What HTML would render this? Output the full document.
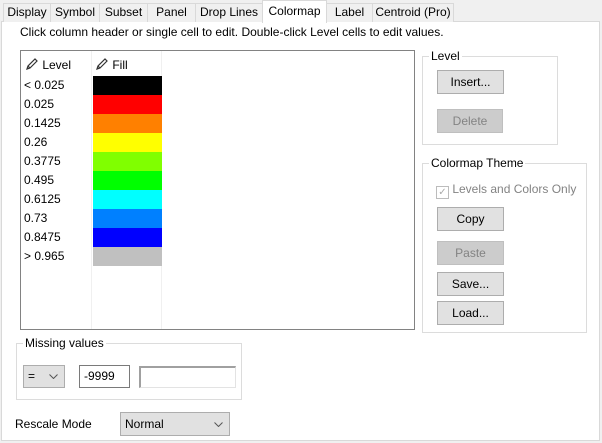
<!DOCTYPE html>
<html><head><style>
*{margin:0;padding:0;box-sizing:border-box}
body{width:602px;height:443px;background:#f0f0f0;position:relative;overflow:hidden;font-family:"Liberation Sans",sans-serif;font-size:12px;color:#000}
.a{position:absolute}
.tab{position:absolute;top:3px;height:19px;border:1px solid #d9d9d9;border-bottom:none;background:#f0f0f0;text-align:center;line-height:17px;font-size:12px}
.panel{position:absolute;left:1px;top:21px;width:599px;height:420px;background:#fff;border:1px solid #d9d9d9}
.grp{position:absolute;border:1px solid #dcdcdc}
.grp span{position:absolute;top:-8px;left:6px;background:#fff;padding:0 2px;line-height:14px}
.btn{position:absolute;width:67px;height:24px;background:#e1e1e1;border:1px solid #adadad;text-align:center;line-height:22px}
.dis{background:#cccccc;border-color:#bfbfbf;color:#838383}
.row{position:absolute;left:3px;height:19px;line-height:19px}
.sw{position:absolute;left:72px;width:69px;height:19px}
.chev{position:absolute;right:6px;top:8px}
</style></head><body>
<div class="panel"></div>
<div class="tab" style="left:3px;width:48px">Display</div>
<div class="tab" style="left:50px;width:50px">Symbol</div>
<div class="tab" style="left:99px;width:49px">Subset</div>
<div class="tab" style="left:147px;width:49px">Panel</div>
<div class="tab" style="left:195px;width:68px">Drop Lines</div>
<div class="tab" style="left:262px;top:0;height:23px;width:65px;background:#fff;line-height:20px;z-index:2">Colormap</div>
<div class="tab" style="left:326px;width:47px">Label</div>
<div class="tab" style="left:372px;width:82px">Centroid (Pro)</div>

<div class="a" style="left:20px;top:25px">Click column header or single cell to edit. Double-click Level cells to edit values.</div>

<div class="a" style="left:20px;top:50px;width:395px;height:280px;border:1px solid #828282;background:#fff">
 <div class="a" style="left:70px;top:0;width:1px;height:278px;background:#f0f0f0"></div>
 <div class="a" style="left:140px;top:0;width:1px;height:278px;background:#f0f0f0"></div>
 <div class="a" style="left:4px;top:6px;line-height:14px"><svg width="14" height="14" style="vertical-align:-2px"><path d="M2 12 L3 9 L10 2 L12 4 L5 11 Z M3 9 L5 11" fill="none" stroke="#333" stroke-width="1.2"/></svg> Level</div>
 <div class="a" style="left:74px;top:6px;line-height:14px"><svg width="14" height="14" style="vertical-align:-2px"><path d="M2 12 L3 9 L10 2 L12 4 L5 11 Z M3 9 L5 11" fill="none" stroke="#333" stroke-width="1.2"/></svg> Fill</div>
 <div class="row" style="top:25px">&lt; 0.025</div><div class="sw" style="top:25px;background:#000"></div>
 <div class="row" style="top:44px">0.025</div><div class="sw" style="top:44px;background:#ff0000"></div>
 <div class="row" style="top:63px">0.1425</div><div class="sw" style="top:63px;background:#ff8000"></div>
 <div class="row" style="top:82px">0.26</div><div class="sw" style="top:82px;background:#ffff00"></div>
 <div class="row" style="top:101px">0.3775</div><div class="sw" style="top:101px;background:#80ff00"></div>
 <div class="row" style="top:120px">0.495</div><div class="sw" style="top:120px;background:#00ff00"></div>
 <div class="row" style="top:139px">0.6125</div><div class="sw" style="top:139px;background:#00ffff"></div>
 <div class="row" style="top:158px">0.73</div><div class="sw" style="top:158px;background:#0080ff"></div>
 <div class="row" style="top:177px">0.8475</div><div class="sw" style="top:177px;background:#0000ff"></div>
 <div class="row" style="top:196px">&gt; 0.965</div><div class="sw" style="top:196px;background:#c0c0c0"></div>
</div>

<div class="grp" style="left:422px;top:56px;width:136px;height:89px"><span>Level</span></div>
<div class="btn" style="left:437px;top:70px">Insert...</div>
<div class="btn dis" style="left:437px;top:109px;width:66px">Delete</div>

<div class="grp" style="left:422px;top:163px;width:165px;height:170px"><span>Colormap Theme</span></div>
<div class="a" style="left:436px;top:182px;color:#838383;line-height:14px"><span style="display:inline-block;width:13px;height:13px;border:1px solid #bcbcbc;vertical-align:-2px;text-align:center;font-size:10px;line-height:11px;color:#aaa">✓</span> Levels and Colors Only</div>
<div class="btn" style="left:437px;top:207px">Copy</div>
<div class="btn dis" style="left:437px;top:241px">Paste</div>
<div class="btn" style="left:437px;top:272px">Save...</div>
<div class="btn" style="left:437px;top:301px">Load...</div>

<div class="grp" style="left:16px;top:343px;width:226px;height:57px"><span>Missing values</span></div>
<div class="a" style="left:23px;top:365px;width:42px;height:23px;background:#e1e1e1;border:1px solid #adadad;line-height:21px;padding-left:4px">=<svg class="chev" width="9" height="5"><path d="M0.5 0.5 L4.5 4.5 L8.5 0.5" fill="none" stroke="#555"/></svg></div>
<div class="a" style="left:79px;top:365px;width:51px;height:23px;border:1px solid #7a7a7a;line-height:21px;padding-left:4px">-9999</div>
<div class="a" style="left:139px;top:366px;width:97px;height:22px;border:1px solid #e3e3e3;border-left:2px solid #a0a0a0;border-top:2px solid #a0a0a0"></div>

<div class="a" style="left:15px;top:417px">Rescale Mode</div>
<div class="a" style="left:120px;top:412px;width:110px;height:24px;background:#e1e1e1;border:1px solid #adadad;line-height:22px;padding-left:4px">Normal<svg class="chev" width="9" height="5" style="top:9px"><path d="M0.5 0.5 L4.5 4.5 L8.5 0.5" fill="none" stroke="#555"/></svg></div>
</body></html>
